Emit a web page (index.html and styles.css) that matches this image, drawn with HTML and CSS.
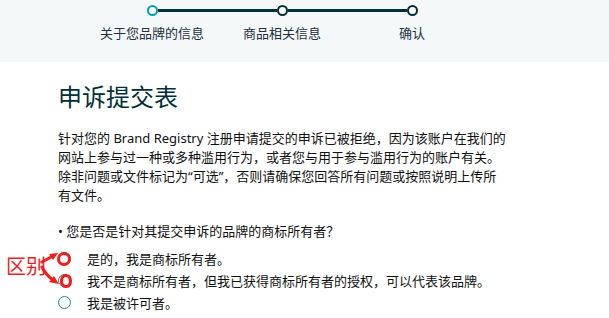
FILE: index.html
```html
<!DOCTYPE html>
<html lang="zh">
<head>
<meta charset="utf-8">
<title>申诉提交表</title>
<link rel="stylesheet" href="styles.css">
</head>
<body>
<div class="band">
  <div class="track">
    <span class="dot active"></span>
    <span class="line"></span>
    <span class="dot"></span>
    <span class="line"></span>
    <span class="dot"></span>
  </div>
  <div class="labels">
    <span class="label">关于您品牌的信息</span>
    <span class="label">商品相关信息</span>
    <span class="label">确认</span>
  </div>
</div>
<main class="main">
  <h1 class="title">申诉提交表</h1>
  <p class="intro">针对您的 Brand Registry 注册申请提交的申诉已被拒绝，因为该账户在我们的网站上参与过一种或多种滥用行为，或者您与用于参与滥用行为的账户有关。除非问题或文件标记为“可选”，否则请确保您回答所有问题或按照说明上传所有文件。</p>
  <p class="question">• 您是否是针对其提交申诉的品牌的商标所有者？</p>
  <div class="options">
    <label class="opt"><span class="radio"></span><span>是的，我是商标所有者。</span></label>
    <label class="opt"><span class="radio"></span><span>我不是商标所有者，但我已获得商标所有者的授权，可以代表该品牌。</span></label>
    <label class="opt"><span class="radio"></span><span>我是被许可者。</span></label>
  </div>
</main>
<div class="note">
  <span class="note-text">区别</span>
  <svg class="note-svg" width="80" height="50" viewBox="0 0 80 50">
    <path d="M42 17 L53 11" stroke="#f41c1c" stroke-width="3" fill="none" stroke-linecap="round"/>
    <polygon points="58,8 49,9 53,15" fill="#f41c1c"/>
    <path d="M42 22 Q46 30 53 35" stroke="#f41c1c" stroke-width="3" fill="none" stroke-linecap="round"/>
    <polygon points="59,39 49,37 54,31" fill="#f41c1c"/>
    <circle cx="64" cy="14" r="5.5" stroke="#f41c1c" stroke-width="3" fill="#fff"/>
    <ellipse cx="66" cy="36" rx="4.5" ry="5.5" stroke="#f41c1c" stroke-width="3.2" fill="none"/>
  </svg>
</div>
</body>
</html>
```

FILE: styles.css
```css
html, body {
  margin: 0;
  padding: 0;
  background: #ffffff;
  font-family: "Noto Sans", "Noto Sans CJK SC", sans-serif;
  color: #0f1111;
}

.band {
  background: #f4f8f9;
  height: 62px;
  box-sizing: border-box;
  padding-top: 5px;
}

.track {
  display: flex;
  align-items: center;
  width: 271px;
  margin-left: 147px;
}

.dot {
  width: 11px;
  height: 11px;
  box-sizing: border-box;
  border: 2.5px solid #002f36;
  border-radius: 50%;
  background: #fff;
  flex: none;
}

.dot.active {
  border-color: #00a0ad;
}

.line {
  flex: 1;
  height: 3px;
  background: #002f36;
}

.labels {
  display: flex;
  margin-left: 87px;
  margin-top: 8px;
}

.label {
  width: 130px;
  text-align: center;
  font-size: 13px;
  line-height: 18px;
  color: #232f3e;
}

.main {
  padding-left: 58px;
}

.title {
  margin: 20px 0 0;
  font-size: 24px;
  font-weight: 400;
  line-height: 30px;
  color: #002f36;
}

.intro {
  margin: 17px 0 0;
  width: 448px;
  font-size: 13px;
  line-height: 19px;
  color: #0f1111;
}

.question {
  margin: 17px 0 0;
  font-size: 13px;
  line-height: 18px;
}

.options {
  display: flex;
  flex-direction: column;
  margin-top: 7px;
}

.opt {
  display: flex;
  align-items: center;
  height: 22px;
  font-size: 13px;
}

.radio {
  width: 13px;
  height: 13px;
  box-sizing: border-box;
  border: 1.5px solid #1a8a96;
  border-radius: 50%;
  margin-right: 16px;
  flex: none;
}

.note {
  position: absolute;
  left: 0;
  top: 245px;
  width: 80px;
  height: 50px;
}

.note-text {
  position: absolute;
  left: 6px;
  top: 9px;
  font-family: "Noto Sans CJK SC", sans-serif;
  font-size: 20px;
  line-height: 24px;
  color: #f41c1c;
}

.note-svg {
  position: absolute;
  left: 0;
  top: 0;
}
```
